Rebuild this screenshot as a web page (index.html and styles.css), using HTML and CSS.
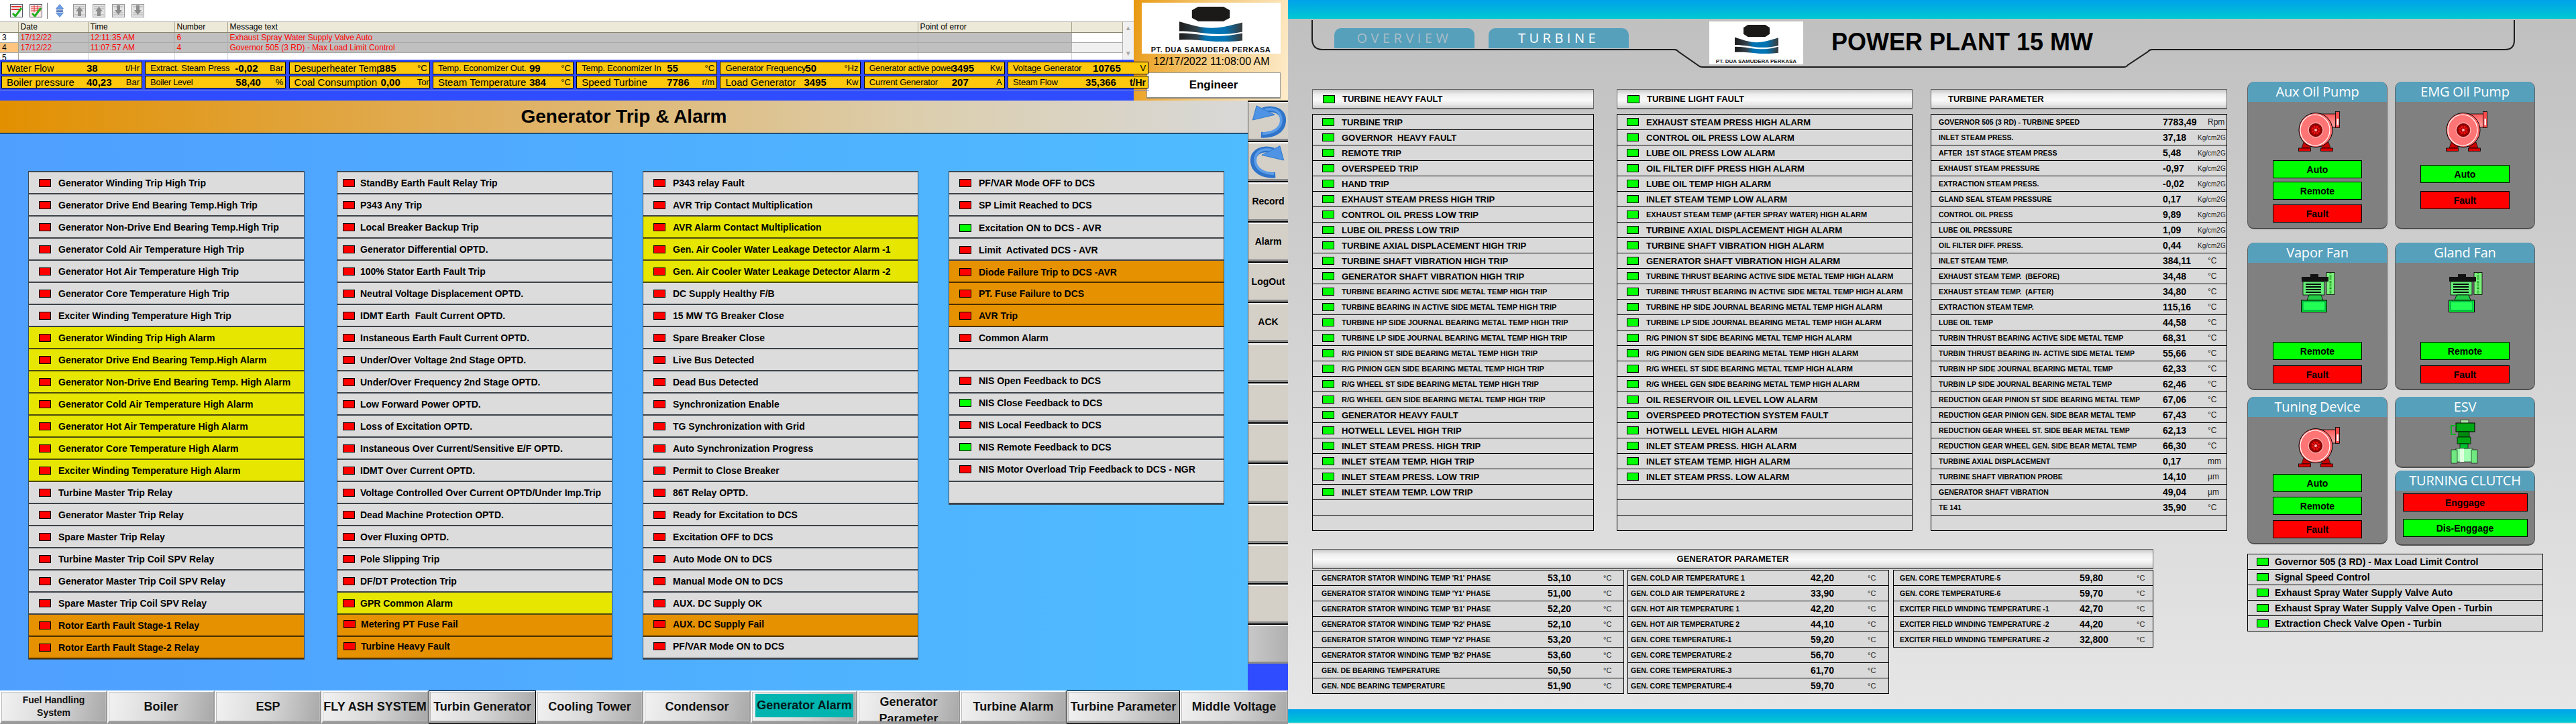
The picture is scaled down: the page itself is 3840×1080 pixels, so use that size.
FILE: index.html
```html
<!DOCTYPE html>
<html lang="en">
<head>
<meta charset="utf-8">
<title>Power Plant 15 MW</title>
<link rel="stylesheet" href="styles.css">
</head>
<body>
<svg class="defs" width="0" height="0" aria-hidden="true">
  <defs>
    <linearGradient id="wave" x1="0" x2="1" y1="0" y2="0">
      <stop offset="0" stop-color="#1c1c1c"/><stop offset=".28" stop-color="#33424c"/><stop offset=".42" stop-color="#0074b4"/><stop offset=".72" stop-color="#0074b4"/><stop offset="1" stop-color="#3a3a3a"/>
    </linearGradient>
    <linearGradient id="pipe" x1="0" x2="0" y1="0" y2="1">
      <stop offset="0" stop-color="#ff5a5a"/><stop offset=".5" stop-color="#ff9a9a"/><stop offset="1" stop-color="#d00000"/>
    </linearGradient>
    <symbol id="logo" viewBox="0 0 100 100" preserveAspectRatio="none">
      <polygon points="30,0 70,0 80,10 80,32 70,42 30,42 20,32 20,10" fill="#1c1a18"/>
      <path d="M0 43 C18 52 32 60 50 61 C68 61 84 52 100 45 V72 C84 78 68 80 50 78 C30 74 16 70 0 70 Z" fill="url(#wave)"/>
      <path d="M0 76 C18 76 32 80 50 84 C68 86 84 82 100 76 V97 C84 100 68 102 50 99 C30 95 16 94 0 95 Z" fill="url(#wave)"/>
    </symbol>
    <symbol id="pump" viewBox="0 0 62 60">
      <path d="M26 4 H56 V24 H47 L40 38 H26 Z" fill="url(#pipe)" stroke="#000" stroke-width=".8"/>
      <rect x="55.5" y=".5" width="6" height="24" fill="#ff4a4a" stroke="#000" stroke-width=".8"/>
      <rect x="57.5" y="11" width="2.5" height="10" fill="#fff"/>
      <path d="M8 46 L18 50 V55 H5 Z M45 46 L35 50 V55 H48 Z" fill="#c80000" stroke="#000" stroke-width=".6"/>
      <rect x=".5" y="55" width="18" height="4.5" fill="#e00000" stroke="#000" stroke-width=".8"/>
      <rect x="33.5" y="55" width="18" height="4.5" fill="#e00000" stroke="#000" stroke-width=".8"/>
      <ellipse cx="26" cy="28" rx="25" ry="25.5" fill="#ff6868" stroke="#000"/>
      <ellipse cx="25" cy="28" rx="22" ry="23" fill="#ff7474" stroke="#fff" stroke-width="1.2"/>
      <circle cx="26" cy="28" r="11" fill="#ff5a5a" stroke="#fff" stroke-width=".6"/>
      <circle cx="26" cy="28" r="9.5" fill="#a00000" stroke="#400" stroke-width=".8"/>
      <circle cx="26" cy="28" r="6.5" fill="#ee1010"/>
      <path d="M26 19 V37 M17 28 H35 M20 22 L32 34 M32 22 L20 34" stroke="#7a0000" stroke-width="1"/>
      <circle cx="26" cy="28" r="2" fill="#ffb0b0"/>
    </symbol>
    <symbol id="fan" viewBox="0 0 51 60">
      <rect x="38" y=".5" width="12" height="33" fill="#7cf07c" stroke="#000" stroke-width=".8"/>
      <path d="M44 2 V32" stroke="#0a8a0a" stroke-width="3" stroke-dasharray="1 1.2"/>
      <rect x="1" y="7" width="40" height="7" fill="#111"/>
      <rect x="14" y="3" width="12" height="5" fill="#111"/>
      <rect x="3" y="14" width="32" height="20" fill="#66ee77" stroke="#000" stroke-width=".8"/>
      <path d="M7 18 H30 M7 22 H30 M7 26 H30 M7 30 H30" stroke="#000" stroke-width="2"/>
      <path d="M12 34 H30 L33 42 H9 Z" fill="#22cc44" stroke="#000" stroke-width=".8"/>
      <rect x=".5" y="42" width="38" height="17.5" fill="#00ee33" stroke="#000"/>
      <rect x="3" y="44" width="33" height="13" fill="#22ff55" stroke="#045" stroke-width=".6"/>
    </symbol>
    <symbol id="valve" viewBox="0 0 43 66">
      <rect x="16" y=".5" width="12" height="5" fill="#a8e8a8" stroke="#000" stroke-width=".6"/>
      <rect x="9" y="5" width="28" height="13" fill="#00a814" stroke="#000"/>
      <path d="M9 9 H2 V22 H9" fill="none" stroke="#00b020" stroke-width="2"/>
      <rect x="13" y="18" width="16" height="8" fill="#008a10" stroke="#000" stroke-width=".7"/>
      <rect x="11" y="26" width="20" height="10" fill="#00a814" stroke="#000" stroke-width=".7"/>
      <rect x="15" y="36" width="12" height="7" fill="#00c030" stroke="#000" stroke-width=".7"/>
      <rect x="9" y="43" width="25" height="20" fill="#a0ffb0" stroke="#000" stroke-width=".6"/>
      <rect x="2" y="45" width="9" height="20" fill="#70e880" stroke="#000" stroke-width=".6"/>
      <rect x="32" y="45" width="9" height="20" fill="#70e880" stroke="#000" stroke-width=".6"/>
      <rect x="15" y="43" width="6" height="20" fill="#e0ffe0"/>
    </symbol>
    <symbol id="t-list" viewBox="0 0 19 20">
      <rect x=".5" y=".5" width="18" height="19" fill="#f4f4f4" stroke="#556"/>
      <rect x="2" y="3" width="15" height="2" fill="#e03030"/>
      <rect x="2" y="7" width="15" height="2" fill="#e03030"/>
      <path d="M4 14 L8 18 L17 6" fill="none" stroke="#20b020" stroke-width="3"/>
    </symbol>
    <symbol id="t-grid" viewBox="0 0 19 20">
      <rect x=".5" y=".5" width="18" height="19" fill="#fbe8e8" stroke="#556"/>
      <path d="M2 4 H17 M2 7 H17 M2 10 H17 M7 2 V12 M12 2 V12" stroke="#e03030" stroke-width="1"/>
      <path d="M4 14 L8 18 L17 6" fill="none" stroke="#20b020" stroke-width="3"/>
    </symbol>
    <symbol id="t-updown" viewBox="0 0 12 20">
      <path d="M6 .5 L11.5 7 H.5 Z M6 19.5 L11.5 13 H.5 Z" fill="#6a9fe8" stroke="#3565b0" stroke-width=".6"/>
      <rect x="1" y="8.5" width="10" height="1.2" fill="#2a55a8"/><rect x="1" y="10.8" width="10" height="1.2" fill="#2a55a8"/>
    </symbol>
    <symbol id="t-up" viewBox="0 0 19 20">
      <rect x=".5" y=".5" width="18" height="19" fill="#e4e4e4" stroke="#999"/>
      <path d="M2 4 H17 M2 7 H17 M2 16 H17" stroke="#aaa"/>
      <path d="M9.5 4 L15 11 H12 V18 H7 V11 H4 Z" fill="#8c8c8c"/>
    </symbol>
    <symbol id="t-down" viewBox="0 0 19 20">
      <rect x=".5" y=".5" width="18" height="19" fill="#e4e4e4" stroke="#999"/>
      <path d="M2 4 H17 M2 13 H17 M2 16 H17" stroke="#aaa"/>
      <path d="M9.5 16 L15 9 H12 V2 H7 V9 H4 Z" fill="#8c8c8c"/>
    </symbol>
    <symbol id="undo" viewBox="0 0 60 57">
      <path d="M22 13 C38 8 54 14 53 30 C52 44 38 52 19 51" fill="none" stroke="#2f74c8" stroke-width="9"/>
      <path d="M22 13 C38 8 51 14 50 30 C49 42 36 49 21 49" fill="none" stroke="#5a9ce8" stroke-width="4"/>
      <polygon points="12,6 6,28 40,20" fill="#4f94e4" stroke="#2f74c8" stroke-width="1"/>
    </symbol>
  </defs>
</svg>

<div class="screens">
  <!-- Left window: generator alarms -->
  <section class="win-left">
    <div class="top">
      <div class="top-main">
        <div class="toolbar">
          <svg class="tool"><use href="#t-list"/></svg>
          <svg class="tool"><use href="#t-grid"/></svg>
          <span class="tool-sep"></span>
          <svg class="tool tool-ud"><use href="#t-updown"/></svg>
          <svg class="tool"><use href="#t-up"/></svg>
          <svg class="tool"><use href="#t-up"/></svg>
          <svg class="tool"><use href="#t-down"/></svg>
          <svg class="tool"><use href="#t-down"/></svg>
        </div>
        <div class="msg-wrap">
          <table class="msg">
            <colgroup><col class="c0"><col class="c1"><col class="c2"><col class="c3"><col class="c4"><col class="c5"><col class="c6"></colgroup>
            <thead><tr><th></th><th>Date</th><th>Time</th><th>Number</th><th>Message text</th><th>Point of error</th><th></th></tr></thead>
            <tbody>
              <tr class="hit"><th>3</th><td>17/12/22</td><td>12:11:35 AM</td><td>6</td><td>Exhaust Spray Water Supply Valve Auto</td><td></td><td class="free"></td></tr>
              <tr class="hit"><th class="cur">4</th><td>17/12/22</td><td>11:07:57 AM</td><td>4</td><td>Governor 505 (3 RD) - Max Load Limit Control</td><td></td><td class="free2"></td></tr>
              <tr><th>5</th><td></td><td></td><td></td><td></td><td></td><td></td></tr>
            </tbody>
          </table>
          <div class="scroll"><span>▲</span><span>▼</span></div>
        </div>
        <div class="metrics">
          <div class="m"><span class="ml f14">Water Flow</span><b>38</b><span class="mu">t/Hr</span></div>
          <div class="m v133"><span class="ml f13">Extract. Steam Press</span><b>-0,02</b><span class="mu">Bar</span></div>
          <div class="m v134"><span class="ml f14">Desuperheater Temp.</span><b>385</b><span class="mu">°C</span></div>
          <div class="m v143"><span class="ml f13">Temp. Economizer Out.</span><b>99</b><span class="mu">°C</span></div>
          <div class="m v134"><span class="ml f13">Temp. Economizer In</span><b>55</b><span class="mu">°C</span></div>
          <div class="m"><span class="ml f13">Generator Frequency</span><b>50</b><span class="mu">°Hz</span></div>
          <div class="m v130"><span class="ml f12">Generator active power</span><b>3495</b><span class="mu">Kw</span></div>
          <div class="m"><span class="ml f13">Voltage Generator</span><b>10765</b><span class="mu">V</span></div>
          <div class="m"><span class="ml f15">Boiler pressure</span><b>40,23</b><span class="mu">Bar</span></div>
          <div class="m v134"><span class="ml f12">Boiler Level</span><b>58,40</b><span class="mu">%</span></div>
          <div class="m v136"><span class="ml f15">Coal Consumption</span><b>0,00</b><span class="mu over">Ton</span></div>
          <div class="m v143"><span class="ml f15">Steam Temperature</span><b>384</b><span class="mu">°C</span></div>
          <div class="m v134"><span class="ml f15">Speed Turbine</span><b>7786</b><span class="mu">r/m</span></div>
          <div class="m v124"><span class="ml f15">Load Generator</span><b>3495</b><span class="mu">Kw</span></div>
          <div class="m v130"><span class="ml f13">Current Generator</span><b>207</b><span class="mu">A</span></div>
          <div class="m v115"><span class="ml f13">Steam Flow</span><b>35,366</b><span class="mu mub">t/Hr</span></div>
        </div>
      </div>
      <aside class="brand">
        <div class="logo-big">
          <svg class="logo-mark"><use href="#logo"/></svg>
          <span>PT. DUA SAMUDERA PERKASA</span>
        </div>
        <div class="clock">12/17/2022 11:08:00 AM</div>
        <div class="user">Engineer</div>
      </aside>
    </div>

    <div class="mid">
      <main class="content">
        <h1 class="title">Generator Trip &amp; Alarm</h1>
        <div class="lists">
          <ul class="alarms first">
            <li><i class="led"></i>Generator Winding Trip High Trip</li>
            <li><i class="led"></i>Generator Drive End Bearing Temp.High Trip</li>
            <li><i class="led"></i>Generator Non-Drive End Bearing Temp.High Trip</li>
            <li><i class="led"></i>Generator Cold Air Temperature High Trip</li>
            <li><i class="led"></i>Generator Hot Air Temperature High Trip</li>
            <li><i class="led"></i>Generator Core Temperature High Trip</li>
            <li><i class="led"></i>Exciter Winding Temperature High Trip</li>
            <li class="warn"><i class="led"></i>Generator Winding Trip High Alarm</li>
            <li class="warn"><i class="led"></i>Generator Drive End Bearing Temp.High Alarm</li>
            <li class="warn"><i class="led"></i>Generator Non-Drive End Bearing Temp. High Alarm</li>
            <li class="warn"><i class="led"></i>Generator Cold Air Temperature High Alarm</li>
            <li class="warn"><i class="led"></i>Generator Hot Air Temperature High Alarm</li>
            <li class="warn"><i class="led"></i>Generator Core Temperature High Alarm</li>
            <li class="warn"><i class="led"></i>Exciter Winding Temperature High Alarm</li>
            <li><i class="led"></i>Turbine Master Trip Relay</li>
            <li><i class="led"></i>Generator Master Trip Relay</li>
            <li><i class="led"></i>Spare Master Trip Relay</li>
            <li><i class="led"></i>Turbine Master Trip Coil SPV Relay</li>
            <li><i class="led"></i>Generator Master Trip Coil SPV Relay</li>
            <li><i class="led"></i>Spare Master Trip Coil SPV Relay</li>
            <li class="crit"><i class="led"></i>Rotor Earth Fault Stage-1 Relay</li>
            <li class="crit"><i class="led"></i>Rotor Earth Fault Stage-2 Relay</li>
          </ul>
          <ul class="alarms tight">
            <li><i class="led"></i>StandBy Earth Fault Relay Trip</li>
            <li><i class="led"></i>P343 Any Trip</li>
            <li><i class="led"></i>Local Breaker Backup Trip</li>
            <li><i class="led"></i>Generator Differential OPTD.</li>
            <li><i class="led"></i>100% Stator Earth Fault Trip</li>
            <li><i class="led"></i>Neutral Voltage Displacement OPTD.</li>
            <li><i class="led"></i>IDMT Earth&nbsp; Fault Current OPTD.</li>
            <li><i class="led"></i>Instaneous Earth Fault Current OPTD.</li>
            <li><i class="led"></i>Under/Over Voltage 2nd Stage OPTD.</li>
            <li><i class="led"></i>Under/Over Frequency 2nd Stage OPTD.</li>
            <li><i class="led"></i>Low Forward Power OPTD.</li>
            <li><i class="led"></i>Loss of Excitation OPTD.</li>
            <li><i class="led"></i>Instaneous Over Current/Sensitive E/F OPTD.</li>
            <li><i class="led"></i>IDMT Over Current OPTD.</li>
            <li><i class="led"></i>Voltage Controlled Over Current OPTD/Under Imp.Trip</li>
            <li><i class="led"></i>Dead Machine Protection OPTD.</li>
            <li><i class="led"></i>Over Fluxing OPTD.</li>
            <li><i class="led"></i>Pole Slipping Trip</li>
            <li><i class="led"></i>DF/DT Protection Trip</li>
            <li class="warn"><i class="led"></i>GPR Common Alarm</li>
            <li class="crit up"><i class="led"></i>Metering PT Fuse Fail</li>
            <li class="crit up"><i class="led"></i>Turbine Heavy Fault</li>
          </ul>
          <ul class="alarms">
            <li><i class="led"></i>P343 relay Fault</li>
            <li><i class="led"></i>AVR Trip Contact Multiplication</li>
            <li class="warn"><i class="led"></i>AVR Alarm Contact Multiplication</li>
            <li class="warn"><i class="led"></i>Gen. Air Cooler Water Leakage Detector Alarm -1</li>
            <li class="warn"><i class="led"></i>Gen. Air Cooler Water Leakage Detector Alarm -2</li>
            <li><i class="led"></i>DC Supply Healthy F/B</li>
            <li><i class="led"></i>15 MW TG Breaker Close</li>
            <li><i class="led"></i>Spare Breaker Close</li>
            <li><i class="led"></i>Live Bus Detected</li>
            <li><i class="led"></i>Dead Bus Detected</li>
            <li><i class="led"></i>Synchronization Enable</li>
            <li><i class="led"></i>TG Synchronization with Grid</li>
            <li><i class="led"></i>Auto Synchronization Progress</li>
            <li><i class="led"></i>Permit to Close Breaker</li>
            <li><i class="led"></i>86T Relay OPTD.</li>
            <li><i class="led"></i>Ready for Excitation to DCS</li>
            <li><i class="led"></i>Excitation OFF to DCS</li>
            <li><i class="led"></i>Auto Mode ON to DCS</li>
            <li><i class="led"></i>Manual Mode ON to DCS</li>
            <li><i class="led"></i>AUX. DC Supply OK</li>
            <li class="crit up"><i class="led"></i>AUX. DC Supply Fail</li>
            <li class="up"><i class="led"></i>PF/VAR Mode ON to DCS</li>
          </ul>
          <ul class="alarms">
            <li><i class="led"></i>PF/VAR Mode OFF to DCS</li>
            <li><i class="led"></i>SP Limit Reached to DCS</li>
            <li class="down"><i class="led on"></i>Excitation ON to DCS - AVR</li>
            <li class="down"><i class="led"></i>Limit&nbsp; Activated DCS - AVR</li>
            <li class="crit down"><i class="led"></i>Diode Failure Trip to DCS -AVR</li>
            <li class="crit"><i class="led"></i>PT. Fuse Failure to DCS</li>
            <li class="crit"><i class="led"></i>AVR Trip</li>
            <li><i class="led"></i>Common Alarm</li>
            <li></li>
            <li class="up"><i class="led"></i>NIS Open Feedback to DCS</li>
            <li class="up"><i class="led on"></i>NIS Close Feedback to DCS</li>
            <li class="up"><i class="led"></i>NIS Local Feedback to DCS</li>
            <li class="up"><i class="led on"></i>NIS Remote Feedback to DCS</li>
            <li class="up"><i class="led"></i>NIS Motor Overload Trip Feedback to DCS - NGR</li>
            <li></li>
          </ul>
        </div>
      </main>
      <nav class="side">
        <div class="sbtn"><svg class="sicon"><use href="#undo"/></svg></div>
        <div class="sbtn"><svg class="sicon flip"><use href="#undo"/></svg></div>
        <div class="sbtn">Record</div>
        <div class="sbtn">Alarm</div>
        <div class="sbtn">LogOut</div>
        <div class="sbtn">ACK</div>
        <div class="sbtn"></div>
        <div class="sbtn"></div>
        <div class="sbtn"></div>
        <div class="sbtn"></div>
        <div class="sbtn"></div>
        <div class="sbtn"></div>
        <div class="sbtn"></div>
        <div class="sbtn dim"></div>
      </nav>
    </div>

    <nav class="tabs-bottom">
      <a class="nb w160 small">Fuel Handling<br>System</a>
      <a class="nb w160">Boiler</a>
      <a class="nb w159">ESP</a>
      <a class="nb w160">FLY ASH SYSTEM</a>
      <a class="nb w160 boxed">Turbin Generator</a>
      <a class="nb w160">Cooling Tower</a>
      <a class="nb w160">Condensor</a>
      <a class="nb w159 active"><span>Generator Alarm</span></a>
      <a class="nb w153 clip">Generator<br>Parameter</a>
      <a class="nb w159">Turbine Alarm</a>
      <a class="nb w169 boxed">Turbine Parameter</a>
      <a class="nb w161">Middle Voltage</a>
    </nav>
  </section>

  <!-- Right window: turbine overview -->
  <section class="win-right">
    <div class="stripe"></div>
    <div class="hmi">
      <svg class="frame" width="1920" height="90" viewBox="0 28 1920 90">
        <path d="M36 30 V58 Q36 74 52 74 H576 Q580 74 582 77 L612 98 Q614 100 618 100 H1246 Q1250 100 1252 97 L1282 77 Q1284 74 1288 74 H1814 Q1828 74 1828 60 V30" fill="none" stroke="#1c1c1c" stroke-width="2"/>
      </svg>
      <header class="head">
        <a class="tab">OVERVIEW</a>
        <a class="tab on">TURBINE</a>
        <div class="logo-small">
          <svg class="logo-mark2"><use href="#logo"/></svg>
          <span>PT. DUA SAMUDERA PERKASA</span>
        </div>
        <h1 class="plant">POWER PLANT 15 MW</h1>
      </header>
      <div class="hbody">
        <div class="data">
          <div class="cols">
            <div class="col col-a">
              <div class="chead"><i class="led"></i>TURBINE HEAVY FAULT</div>
              <ul class="status">
                <li><i class="led"></i>TURBINE TRIP</li>
                <li><i class="led"></i>GOVERNOR&nbsp; HEAVY FAULT</li>
                <li><i class="led"></i>REMOTE TRIP</li>
                <li><i class="led"></i>OVERSPEED TRIP</li>
                <li><i class="led"></i>HAND TRIP</li>
                <li><i class="led"></i>EXHAUST STEAM PRESS HIGH TRIP</li>
                <li><i class="led"></i>CONTROL OIL PRESS LOW TRIP</li>
                <li><i class="led"></i>LUBE OIL PRESS LOW TRIP</li>
                <li><i class="led"></i>TURBINE AXIAL DISPLACEMENT HIGH TRIP</li>
                <li><i class="led"></i>TURBINE SHAFT VIBRATION HIGH TRIP</li>
                <li><i class="led"></i>GENERATOR SHAFT VIBRATION HIGH TRIP</li>
                <li class="sm"><i class="led"></i>TURBINE BEARING ACTIVE SIDE METAL TEMP HIGH TRIP</li>
                <li class="sm"><i class="led"></i>TURBINE BEARING IN ACTIVE SIDE METAL TEMP HIGH TRIP</li>
                <li class="sm"><i class="led"></i>TURBINE HP SIDE JOURNAL BEARING METAL TEMP HIGH TRIP</li>
                <li class="sm"><i class="led"></i>TURBINE LP SIDE JOURNAL BEARING METAL TEMP HIGH TRIP</li>
                <li class="sm"><i class="led"></i>R/G PINION ST SIDE BEARING METAL TEMP HIGH TRIP</li>
                <li class="sm"><i class="led"></i>R/G PINION GEN SIDE BEARING METAL TEMP HIGH TRIP</li>
                <li class="sm"><i class="led"></i>R/G WHEEL ST SIDE BEARING METAL TEMP HIGH TRIP</li>
                <li class="sm"><i class="led"></i>R/G WHEEL GEN SIDE BEARING METAL TEMP HIGH TRIP</li>
                <li><i class="led"></i>GENERATOR HEAVY FAULT</li>
                <li><i class="led"></i>HOTWELL LEVEL HIGH TRIP</li>
                <li><i class="led"></i>INLET STEAM PRESS. HIGH TRIP</li>
                <li><i class="led"></i>INLET STEAM TEMP. HIGH TRIP</li>
                <li><i class="led"></i>INLET STEAM PRESS. LOW TRIP</li>
                <li><i class="led"></i>INLET STEAM TEMP. LOW TRIP</li>
                <li></li>
                <li></li>
              </ul>
            </div>
            <div class="col col-b">
              <div class="chead"><i class="led"></i>TURBINE LIGHT FAULT</div>
              <ul class="status">
                <li><i class="led"></i>EXHAUST STEAM PRESS HIGH ALARM</li>
                <li><i class="led"></i>CONTROL OIL PRESS LOW ALARM</li>
                <li><i class="led"></i>LUBE OIL PRESS LOW ALARM</li>
                <li><i class="led"></i>OIL FILTER DIFF PRESS HIGH ALARM</li>
                <li><i class="led"></i>LUBE OIL TEMP HIGH ALARM</li>
                <li><i class="led"></i>INLET STEAM TEMP LOW ALARM</li>
                <li class="sm"><i class="led"></i>EXHAUST STEAM TEMP (AFTER SPRAY WATER) HIGH ALARM</li>
                <li><i class="led"></i>TURBINE AXIAL DISPLACEMENT HIGH ALARM</li>
                <li><i class="led"></i>TURBINE SHAFT VIBRATION HIGH ALARM</li>
                <li><i class="led"></i>GENERATOR SHAFT VIBRATION HIGH ALARM</li>
                <li class="sm"><i class="led"></i>TURBINE THRUST BEARING ACTIVE SIDE METAL TEMP HIGH ALARM</li>
                <li class="sm"><i class="led"></i>TURBINE THRUST BEARING IN ACTIVE SIDE METAL TEMP HIGH ALARM</li>
                <li class="sm"><i class="led"></i>TURBINE HP SIDE JOURNAL BEARING METAL TEMP HIGH ALARM</li>
                <li class="sm"><i class="led"></i>TURBINE LP SIDE JOURNAL BEARING METAL TEMP HIGH ALARM</li>
                <li class="sm"><i class="led"></i>R/G PINION ST SIDE BEARING METAL TEMP HIGH ALARM</li>
                <li class="sm"><i class="led"></i>R/G PINION GEN SIDE BEARING METAL TEMP HIGH ALARM</li>
                <li class="sm"><i class="led"></i>R/G WHEEL ST SIDE BEARING METAL TEMP HIGH ALARM</li>
                <li class="sm"><i class="led"></i>R/G WHEEL GEN SIDE BEARING METAL TEMP HIGH ALARM</li>
                <li><i class="led"></i>OIL RESERVOIR OIL LEVEL LOW ALARM</li>
                <li><i class="led"></i>OVERSPEED PROTECTION SYSTEM FAULT</li>
                <li><i class="led"></i>HOTWELL LEVEL HIGH ALARM</li>
                <li><i class="led"></i>INLET STEAM PRESS. HIGH ALARM</li>
                <li><i class="led"></i>INLET STEAM TEMP. HIGH ALARM</li>
                <li><i class="led"></i>INLET STEAM PRSS. LOW ALARM</li>
                <li></li>
                <li></li>
                <li></li>
              </ul>
            </div>
            <div class="col col-c">
              <div class="chead param-head">TURBINE PARAMETER</div>
              <ul class="params tp">
                <li><span>GOVERNOR 505 (3 RD) - TURBINE SPEED</span><b>7783,49</b><em>Rpm</em></li>
                <li><span>INLET STEAM PRESS.</span><b>37,18</b><em class="kg">Kg/cm2G</em></li>
                <li><span>AFTER&nbsp; 1ST STAGE STEAM PRESS</span><b>5,48</b><em class="kg">Kg/cm2G</em></li>
                <li><span>EXHAUST STEAM PRESSURE</span><b>-0,97</b><em class="kg">Kg/cm2G</em></li>
                <li><span>EXTRACTION STEAM PRESS.</span><b>-0,02</b><em class="kg">Kg/cm2G</em></li>
                <li><span>GLAND SEAL STEAM PRESSURE</span><b>0,17</b><em class="kg">Kg/cm2G</em></li>
                <li><span>CONTROL OIL PRESS</span><b>9,89</b><em class="kg">Kg/cm2G</em></li>
                <li><span>LUBE OIL PRESSURE</span><b>1,09</b><em class="kg">Kg/cm2G</em></li>
                <li><span>OIL FILTER DIFF. PRESS.</span><b>0,44</b><em class="kg">Kg/cm2G</em></li>
                <li><span>INLET STEAM TEMP.</span><b>384,11</b><em>°C</em></li>
                <li><span>EXHAUST STEAM TEMP.&nbsp; (BEFORE)</span><b>34,48</b><em>°C</em></li>
                <li><span>EXHAUST STEAM TEMP.&nbsp; (AFTER)</span><b>34,80</b><em>°C</em></li>
                <li><span>EXTRACTION STEAM TEMP.</span><b>115,16</b><em>°C</em></li>
                <li><span>LUBE OIL TEMP</span><b>44,58</b><em>°C</em></li>
                <li><span>TURBIN THRUST BEARING ACTIVE SIDE METAL TEMP</span><b>68,31</b><em>°C</em></li>
                <li><span>TURBIN THRUST BEARING IN- ACTIVE SIDE METAL TEMP</span><b>55,66</b><em>°C</em></li>
                <li><span>TURBIN HP SIDE JOURNAL BEARING METAL TEMP</span><b>62,33</b><em>°C</em></li>
                <li><span>TURBIN LP SIDE JOURNAL BEARING METAL TEMP</span><b>62,46</b><em>°C</em></li>
                <li><span>REDUCTION GEAR PINION ST SIDE BEARING METAL TEMP</span><b>67,06</b><em>°C</em></li>
                <li><span>REDUCTION GEAR PINION GEN. SIDE BEAR METAL TEMP</span><b>67,43</b><em>°C</em></li>
                <li><span>REDUCTION GEAR WHEEL ST. SIDE BEAR METAL TEMP</span><b>62,13</b><em>°C</em></li>
                <li><span>REDUCTION GEAR WHEEL GEN. SIDE BEAR METAL TEMP</span><b>66,30</b><em>°C</em></li>
                <li><span>TURBINE AXIAL DISPLACEMENT</span><b>0,17</b><em>mm</em></li>
                <li><span>TURBINE SHAFT VIBRATION PROBE</span><b>14,10</b><em>µm</em></li>
                <li><span>GENERATOR SHAFT VIBRATION</span><b>49,04</b><em>µm</em></li>
                <li><span>TE 141</span><b>35,90</b><em>°C</em></li>
                <li></li>
              </ul>
            </div>
          </div>
          <div class="gen">
            <div class="chead gen-head">GENERATOR PARAMETER</div>
            <div class="gen-tables">
              <ul class="params g1">
                <li><span>GENERATOR STATOR WINDING TEMP 'R1' PHASE</span><b>53,10</b><em>°C</em></li>
                <li><span>GENERATOR STATOR WINDING TEMP 'Y1' PHASE</span><b>51,00</b><em>°C</em></li>
                <li><span>GENERATOR STATOR WINDING TEMP 'B1' PHASE</span><b>52,20</b><em>°C</em></li>
                <li><span>GENERATOR STATOR WINDING TEMP 'R2' PHASE</span><b>52,10</b><em>°C</em></li>
                <li><span>GENERATOR STATOR WINDING TEMP 'Y2' PHASE</span><b>53,20</b><em>°C</em></li>
                <li><span>GENERATOR STATOR WINDING TEMP 'B2' PHASE</span><b>53,60</b><em>°C</em></li>
                <li><span>GEN. DE BEARING TEMPERATURE</span><b>50,50</b><em>°C</em></li>
                <li><span>GEN. NDE BEARING TEMPERATURE</span><b>51,90</b><em>°C</em></li>
              </ul>
              <ul class="params g2">
                <li><span>GEN. COLD AIR TEMPERATURE 1</span><b>42,20</b><em>°C</em></li>
                <li><span>GEN. COLD AIR TEMPERATURE 2</span><b>33,90</b><em>°C</em></li>
                <li><span>GEN. HOT AIR TEMPERATURE 1</span><b>42,20</b><em>°C</em></li>
                <li><span>GEN. HOT AIR TEMPERATURE 2</span><b>44,10</b><em>°C</em></li>
                <li><span>GEN. CORE TEMPERATURE-1</span><b>59,20</b><em>°C</em></li>
                <li><span>GEN. CORE TEMPERATURE-2</span><b>56,70</b><em>°C</em></li>
                <li><span>GEN. CORE TEMPERATURE-3</span><b>61,70</b><em>°C</em></li>
                <li><span>GEN. CORE TEMPERATURE-4</span><b>59,70</b><em>°C</em></li>
              </ul>
              <ul class="params g3">
                <li><span>GEN. CORE TEMPERATURE-5</span><b>59,80</b><em>°C</em></li>
                <li><span>GEN. CORE TEMPERATURE-6</span><b>59,70</b><em>°C</em></li>
                <li><span>EXCITER FIELD WINDING TEMPERATURE -1</span><b>42,70</b><em>°C</em></li>
                <li><span>EXCITER FIELD WINDING TEMPERATURE -2</span><b>44,20</b><em>°C</em></li>
                <li><span>EXCITER FIELD WINDING TEMPERATURE -2</span><b>32,800</b><em>°C</em></li>
              </ul>
            </div>
          </div>
        </div>
        <aside class="units">
          <div class="unit-grid">
            <div class="ucol">
              <section class="panel p220">
                <h2>Aux Oil Pump</h2>
                <svg class="pump mt14"><use href="#pump"/></svg>
                <div class="pb on mt13">Auto</div>
                <div class="pb on mt5">Remote</div>
                <div class="pb off mt7">Fault</div>
              </section>
              <section class="panel p220">
                <h2>Vapor Fan</h2>
                <svg class="fan mt14"><use href="#fan"/></svg>
                <div class="pb on mt44">Remote</div>
                <div class="pb off mt8">Fault</div>
              </section>
              <section class="panel p220">
                <h2>Tuning Device</h2>
                <svg class="pump mt15"><use href="#pump"/></svg>
                <div class="pb on mt10">Auto</div>
                <div class="pb on mt7">Remote</div>
                <div class="pb off mt8">Fault</div>
              </section>
            </div>
            <div class="ucol">
              <section class="panel p220">
                <h2>EMG Oil Pump</h2>
                <svg class="pump mt14"><use href="#pump"/></svg>
                <div class="pb on mt20">Auto</div>
                <div class="pb off mt12">Fault</div>
              </section>
              <section class="panel p220">
                <h2>Gland Fan</h2>
                <svg class="fan mt14"><use href="#fan"/></svg>
                <div class="pb on mt44">Remote</div>
                <div class="pb off mt8">Fault</div>
              </section>
              <section class="panel p106">
                <h2>ESV</h2>
                <svg class="valve mt4"><use href="#valve"/></svg>
              </section>
              <section class="panel p112 clutch">
                <h2>TURNING CLUTCH</h2>
                <div class="pb wide off mt4">Enggage</div>
                <div class="pb wide on mt11">Dis-Enggage</div>
              </section>
            </div>
          </div>
          <ul class="status modes">
            <li><i class="led"></i>Governor 505 (3 RD) - Max Load Limit Control</li>
            <li><i class="led"></i>Signal Speed Control</li>
            <li><i class="led"></i>Exhaust Spray Water Supply Valve Auto</li>
            <li><i class="led"></i>Exhaust Spray Water Supply Valve Open - Turbin</li>
            <li><i class="led"></i>Extraction Check Valve Open - Turbin</li>
          </ul>
        </aside>
      </div>
    </div>
    <div class="stripe stripe-low"></div>
  </section>
</div>
</body>
</html>
```

FILE: styles.css
```css
* { box-sizing: border-box; }
html, body { margin: 0; padding: 0; }
body { width: 3840px; height: 1080px; overflow: hidden; background: #e8e8e8; font-family: "Liberation Sans", Arial, sans-serif; color: #000; }
ul { list-style: none; margin: 0; padding: 0; }
h1, h2 { margin: 0; }
.defs { position: absolute; }
.screens { display: flex; width: 3840px; height: 1080px; }

/* ---------- left window ---------- */
.win-left { width: 1920px; height: 1080px; display: flex; flex-direction: column; background: #304cff; }
.top { height: 150px; display: flex; }
.top-main { width: 1690px; display: flex; flex-direction: column; position: relative; z-index: 2; }
.toolbar { height: 33px; background: #fff; border-bottom: 2px solid #d0d0d0; display: flex; align-items: flex-start; padding: 6px 0 0 15px; }
.tool { width: 19px; height: 20px; margin-right: 10px; flex: none; }
.tool-sep { width: 1px; height: 24px; margin: -2px 12px 0 -3px; background: #777; }
.tool-ud { width: 12px; margin-right: 14px; }
.msg-wrap { height: 56px; display: flex; background: #fff; overflow: hidden; }
.msg { width: 1673px; table-layout: fixed; border-collapse: collapse; font-size: 12px; }
.c0 { width: 27px; } .c1 { width: 104px; } .c2 { width: 129px; } .c3 { width: 79px; } .c4 { width: 1029px; } .c5 { width: 229px; } .c6 { width: 76px; }
.msg th, .msg td { padding: 0 3px; height: 15px; line-height: 14px; text-align: left; font-weight: 400; border-right: 1px solid #d4d4d4; white-space: nowrap; }
.msg thead th { background: #ece9d8; border-right: 1px solid #a8a48c; border-bottom: 1px solid #8a8670; }
.msg tbody th { background: #fff; border-right: 1px solid #a8a48c; border-bottom: 1px solid #aaa; }
.msg tbody th.cur { background: #ffc480; }
.msg .hit td { background: #c0c0c0; color: #f00; border-bottom: 1px solid #a8a8a8; border-right-color: #b0b0b0; }
.msg .hit td.free { background: #fff; }
.msg .hit td.free2 { background: #f0f0f0; }
.scroll { width: 17px; background: #f0f0f0; display: flex; flex-direction: column; justify-content: space-between; align-items: center; font-size: 10px; color: #a8a8a8; line-height: 14px; padding: 2px 0; }
.metrics { height: 61px; background: #304cff; display: grid; grid-template-columns: repeat(8, 210px); grid-auto-rows: 19px; column-gap: 4.3px; row-gap: 2px; padding: 3px 0 0 2px; position: relative; }
.metrics::after { content: ""; position: absolute; left: 0; right: -23px; top: 45px; height: 1px; background: #6d80d8; }
.m { --v: 126px; display: grid; grid-template-columns: var(--v) 1fr auto; align-items: center; height: 19px; background: #fec80c; border: 1.5px solid #000; overflow: hidden; white-space: nowrap; }
.m.v115 { --v: 115px; } .m.v124 { --v: 124px; } .m.v130 { --v: 130px; } .m.v133 { --v: 133px; } .m.v134 { --v: 134px; } .m.v136 { --v: 136px; } .m.v143 { --v: 143px; }
.ml { padding-left: 7px; }
.f12 { font-size: 12.5px; letter-spacing: -.2px; } .f13 { font-size: 13px; letter-spacing: -.2px; } .f14 { font-size: 14px; } .f15 { font-size: 15px; }
.m b { font-size: 15px; }
.mu { font-size: 13px; padding-right: 3px; }
.mu.over { margin-right: -6px; }
.mu.mub { font-weight: 700; font-size: 14px; }

.brand { width: 230px; display: flex; flex-direction: column; align-items: center; background: linear-gradient(100deg, #e8980f 0%, #f4c878 45%, #fdeccc 100%); position: relative; }
.logo-big { width: 207px; height: 76px; margin-top: 4px; background: #fff; display: flex; flex-direction: column; align-items: center; padding-top: 6px; }
.logo-mark { width: 94px; height: 52px; margin-left: -1px; }
.logo-big span { font-size: 11px; font-weight: 700; letter-spacing: .55px; margin-top: 6px; color: #111; white-space: nowrap; }
.clock { font-size: 16px; line-height: 20px; margin-top: 2px; white-space: nowrap; padding-left: 2px; }
.user { width: 200px; height: 39px; margin: 6px 0 0 8px; background: #fff; border: 1px solid #999; border-bottom: 2px solid #888; font-size: 17px; font-weight: 700; display: flex; align-items: center; justify-content: center; }

.mid { height: 880px; display: flex; }
.content { width: 1860px; display: flex; flex-direction: column; }
.title { height: 50px; background: linear-gradient(90deg, #e29000 0%, #e0b060 40%, #dccfb0 75%, #d8d8d8 100%); border-bottom: 2px solid #1c4f7a; font-size: 28px; line-height: 48px; font-weight: 700; text-align: center; }
.lists { height: 830px; display: flex; align-items: flex-start; gap: 45px; padding: 55px 0 0 42px; background: linear-gradient(90deg, #4f9fff 0%, #4fbcff 100%); }
.alarms { width: 411px; border: 1px solid #3a4a5a; border-top: 2px solid #3a4a5a; background: #dcdcdc; }
.alarms.first { width: 412px; margin-right: 3px; }
.alarms li { height: 33px; display: flex; align-items: center; padding-left: 15px; font-size: 14px; font-weight: 700; white-space: nowrap; overflow: hidden; background: #dcdcdc; border-bottom: 2px solid #3c4248; }
.alarms li.warn { background: #e6e600; border-bottom-color: #4a4a10; }
.alarms li.crit { background: #e69100; border-bottom-color: #4a3000; }
.alarms li.up { padding-bottom: 3px; }
.alarms li.down { padding-top: 3px; }
.alarms.tight li { padding-left: 8px; }
.alarms.tight li.crit { padding-left: 9px; }
.led { flex: none; display: inline-block; width: 18px; height: 12px; margin-right: 11px; background: #f00; border: 1px solid #000; }
.led.on { background: #0f0; }
.alarms.tight .led { margin-right: 8px; }

.side { width: 60px; display: flex; flex-direction: column; background: #304cff; }
.sbtn { height: 60px; flex: none; border-top: 2px solid #000; border-bottom: 3px solid #8a8a8a; border-left: 1px solid #555; box-shadow: inset 0 2px 0 #fff; background: #d4d0c8; display: flex; align-items: center; justify-content: center; font-size: 14px; font-weight: 700; }
.sbtn.dim { background: linear-gradient(90deg, #c8c8c8, #b0b0b0); }
.sicon { width: 59px; height: 55px; }
.sicon.flip { transform: scaleX(-1); }

.tabs-bottom { height: 50px; display: flex; background: #304cff; }
.nb { height: 50px; padding: 4px 0 4px; display: flex; align-items: center; justify-content: center; text-align: center; font-size: 18px; line-height: 25px; font-weight: 700; color: #111; white-space: nowrap; overflow: hidden; background: linear-gradient(100deg, #f2f2f2 0%, #d8d8d8 50%, #a8a8a8 100%); border-top: 2px solid #fff; border-left: 2px solid #fff; border-right: 2px solid #999; border-bottom: 4px solid #9a9a9a; box-shadow: inset 0 0 0 1px #bbb; }
.w153 { width: 153px; } .w159 { width: 159px; } .w160 { width: 160px; } .w161 { width: 161px; } .w169 { width: 169px; }
.nb.small { font-size: 14px; line-height: 19px; }
.nb.boxed { outline: 1px solid #000; outline-offset: -1px; }
.nb.clip { align-items: flex-start; padding-top: 3px; }
.nb.active { padding: 3px 4px 6px 5px; }
.nb.active span { display: flex; align-items: center; justify-content: center; width: 100%; height: 100%; background: #00b4b0; color: #001a1a; }

/* ---------- right window ---------- */
.win-right { width: 1920px; height: 1080px; display: flex; flex-direction: column; background: #e8e8e8; }
.stripe { height: 28px; flex: none; background: linear-gradient(180deg, #00a2ea, #00c8d2); }
.stripe-low { height: 20px; }
.hmi { height: 1030px; flex: none; position: relative; background: linear-gradient(180deg, #c0c0c0 0%, #d4d4d4 50%, #e6e6e6 100%); }
.frame { position: absolute; left: 0; top: 0; }
.head { height: 94px; display: flex; align-items: flex-start; padding-left: 69px; position: relative; }
.tab { width: 209px; height: 30px; margin: 14px 21px 0 0; background: #56a0bc; border-radius: 10px 10px 0 0; color: #aabdc7; font-family: "Open Sans", sans-serif; font-size: 20px; line-height: 30px; letter-spacing: 5.5px; text-align: center; }
.tab.on { color: #fff; }
.logo-small { width: 140px; height: 64px; margin: 4px 0 0 99px; background: #fff; display: flex; flex-direction: column; align-items: center; padding-top: 5px; }
.logo-mark2 { width: 65px; height: 43px; }
.logo-small span { font-size: 8px; font-weight: 700; margin-top: 7px; color: #222; white-space: nowrap; }
.plant { margin: 13px 0 0 42px; font-size: 36px; line-height: 44px; font-weight: 700; color: #000; white-space: nowrap; }

.hbody { display: flex; height: 936px; }
.data { width: 1400px; padding: 11px 0 0 36px; }
.cols { display: flex; align-items: flex-start; }
.col-a { width: 420px; margin-right: 34px; }
.col-b { width: 441px; margin-right: 27px; }
.col-c { width: 442px; }
.chead { height: 30px; display: flex; align-items: center; padding-left: 15px; border: 1px solid #666; border-bottom-width: 2px; background: linear-gradient(180deg, #c8c8c8 0%, #eee 25%, #fafafa 55%, #e8e8e8 80%, #cfcfcf 100%); font-size: 13px; font-weight: 700; white-space: nowrap; }
.chead .led { background: #0f0; margin-right: 11px; }
.param-head { padding-left: 25px; }
.status, .params { border: 1px solid #000; border-bottom-width: 0; background: #d9d9d9; }
.cols .status, .cols .params { margin-top: 7px; }
.status li, .params li { height: 23px; border-bottom: 1px solid #000; white-space: nowrap; overflow: hidden; }
.status li { display: flex; align-items: center; padding-left: 14px; font-size: 13px; font-weight: 700; }
.status li.sm { font-size: 11px; }
.status .led { background: #0f0; }

.params li { display: grid; align-items: center; }
.params span { padding-left: var(--pad); font-size: 10.5px; font-weight: 700; overflow: hidden; }
.params b { font-size: 14px; }
.params em { font-style: normal; font-size: 11px; color: #222; }
.tp { --pad: 11px; }
.tp li { grid-template-columns: 345px 52px 1fr; }
.tp em { padding-left: 15px; font-size: 12px; }
.tp em.kg { padding-left: 0; font-size: 10px; }
.gen { margin-top: 27px; width: 1254px; }
.gen-head { justify-content: center; padding-left: 0; }
.gen-tables { display: flex; align-items: flex-start; margin-top: 1px; }
.g1 { --pad: 13px; width: 465px; margin-right: 5px; }
.g1 li { grid-template-columns: 350px 83px 1fr; }
.g2 { --pad: 4px; width: 390px; margin-right: 6px; }
.g2 li { grid-template-columns: 272px 85px 1fr; }
.g3 { --pad: 9px; width: 388px; }
.g3 li { grid-template-columns: 277px 85px 1fr; }

.units { width: 441px; margin-left: 30px; padding-top: 0; }
.unit-grid { display: flex; gap: 11px; }
.ucol { width: 209px; display: flex; flex-direction: column; }
.ucol .panel + .panel { margin-top: 20px; }
.ucol .panel + .panel + .panel { margin-top: 10px; }
.ucol .panel + .panel + .panel.clutch { margin-top: 4px; }
.panel { width: 209px; background: #808080; border-radius: 10px; border: 1px solid #5e5e5e; border-bottom: 2px solid #4e4e4e; border-top: 0; overflow: hidden; display: flex; flex-direction: column; align-items: center; }
.p220 { height: 220px; } .p106 { height: 106px; } .p112 { height: 112px; }
.panel h2 { align-self: stretch; height: 30px; flex: none; background: #56a0bc; color: #fff; font-family: "Open Sans", sans-serif; font-size: 20px; font-weight: 400; line-height: 30px; text-align: center; letter-spacing: -.2px; }
.pump { width: 62px; height: 60px; flex: none; margin-left: 4px; }
.fan { width: 51px; height: 60px; flex: none; margin-left: 2px; }
.valve { width: 43px; height: 66px; flex: none; margin-left: -2px; }
.pb { width: 133px; height: 27px; flex: none; border: 1px solid #000; display: flex; align-items: center; justify-content: center; font-size: 14px; font-weight: 700; color: #000; }
.pb.on { background: #0f0; }
.pb.off { background: #f00; }
.pb.wide { width: 186px; }
.mt4 { margin-top: 4px; } .mt5 { margin-top: 5px; } .mt7 { margin-top: 7px; } .mt8 { margin-top: 8px; } .mt10 { margin-top: 10px; } .mt11 { margin-top: 11px; } .mt12 { margin-top: 12px; } .mt13 { margin-top: 13px; } .mt14 { margin-top: 14px; } .mt15 { margin-top: 15px; } .mt20 { margin-top: 20px; } .mt44 { margin-top: 44px; }
.modes { margin-top: 12px; width: 441px; }
.modes li { font-size: 14px; padding-left: 13px; }
.modes .led { margin-right: 9px; }
```
